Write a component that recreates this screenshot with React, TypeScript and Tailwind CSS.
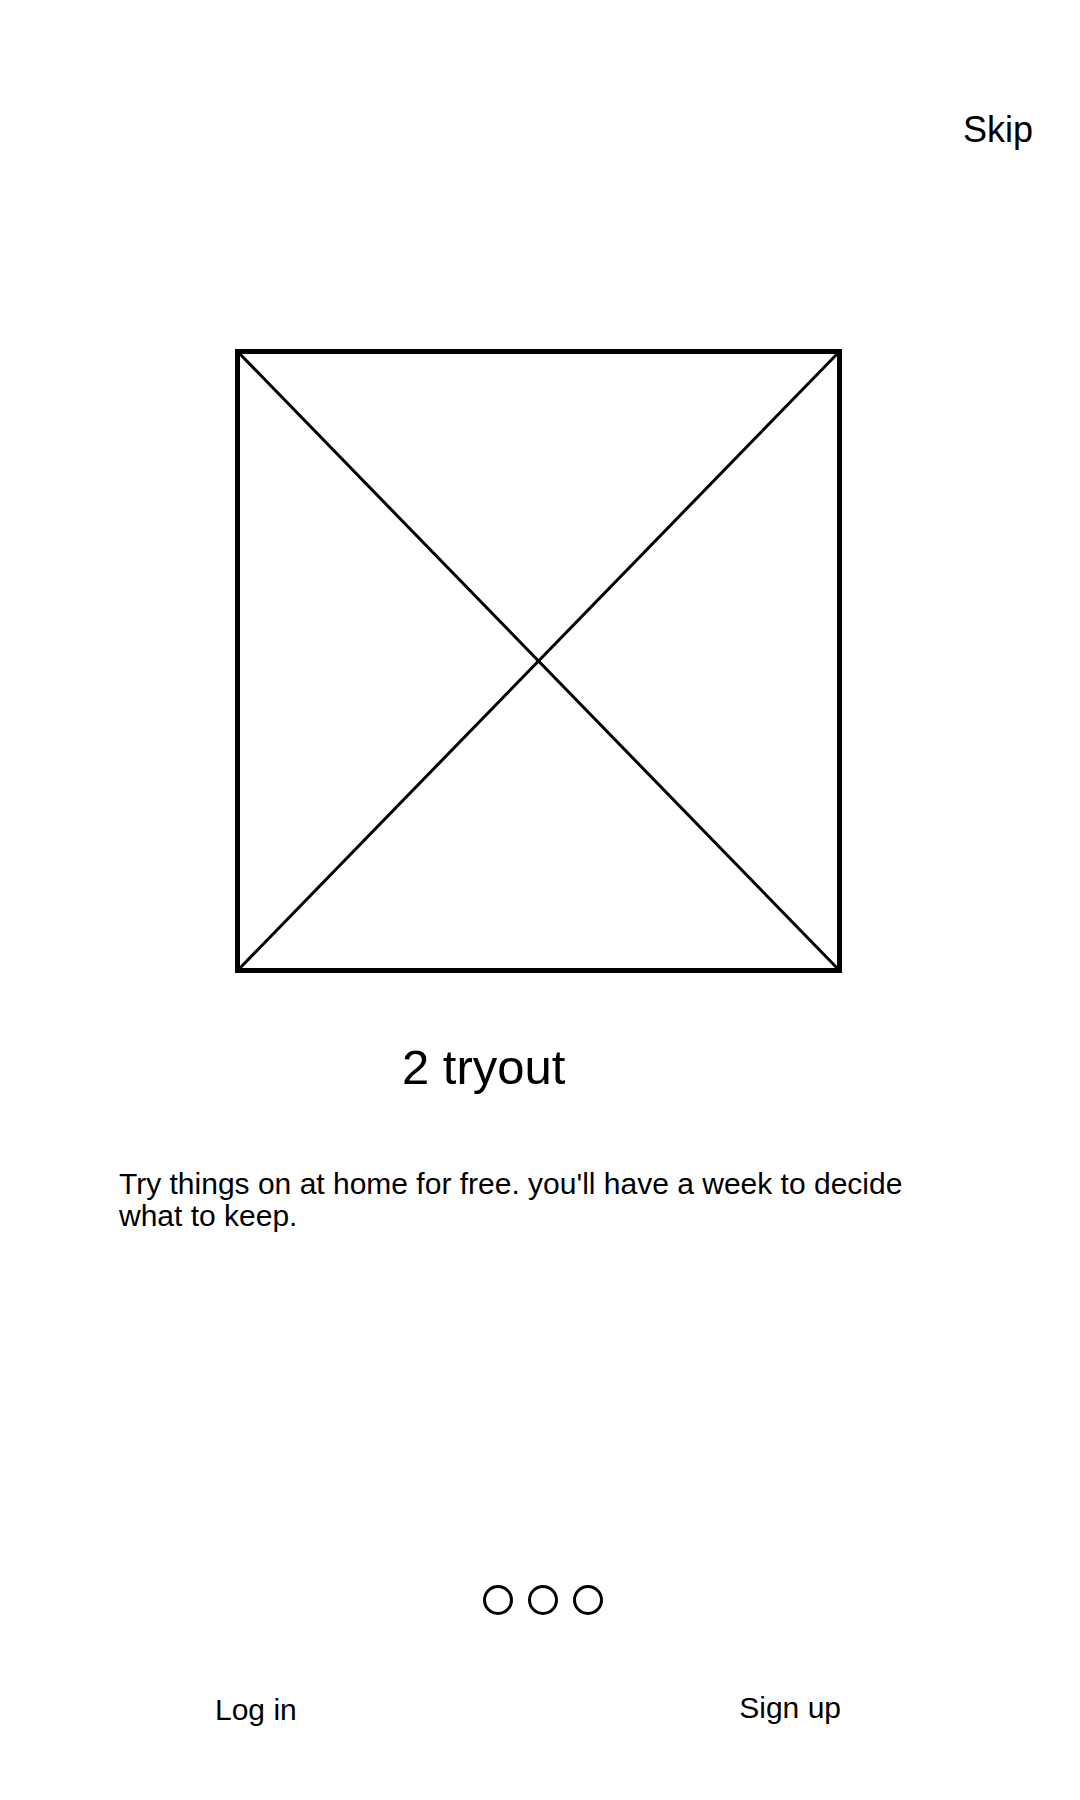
export default function App() {
  return (
    <div
      className="w-[1080px] h-[1800px] bg-white text-black flex flex-col"
      style={{ fontFamily: '"Liberation Sans", Arial, sans-serif' }}
    >
      <div className="flex justify-end pr-[47px] pt-[112px]">
        <span className="text-[36px] leading-[36px]">Skip</span>
      </div>

      <div className="mt-[201px] pl-[235px]">
        <svg width="607" height="624" viewBox="0 0 607 624" className="block">
          <line x1="3" y1="3" x2="604" y2="621" stroke="black" strokeWidth="3" />
          <line x1="604" y1="3" x2="3" y2="621" stroke="black" strokeWidth="3" />
          <rect x="2.5" y="2.5" width="602" height="619" fill="none" stroke="black" strokeWidth="5" />
        </svg>
      </div>

      <div className="mt-[70px] pl-[402px]">
        <span className="text-[49px] leading-[48px]">2 tryout</span>
      </div>

      <div className="mt-[77px] pl-[119px]">
        <p className="text-[30px] leading-[32px] max-w-[800px]">
          Try things on at home for free. you'll have a week to decide what to keep.
        </p>
      </div>

      <div className="mt-[353px] pl-[483px] flex gap-[15px]">
        <span className="w-[30px] h-[30px] rounded-full border-[3px] border-black" />
        <span className="w-[30px] h-[30px] rounded-full border-[3px] border-black" />
        <span className="w-[30px] h-[30px] rounded-full border-[3px] border-black" />
      </div>

      <div className="mt-[78px] pl-[215px] pr-[239px] flex justify-between items-start">
        <span className="text-[30px] leading-[30px] mt-[2px]">Log in</span>
        <span className="text-[30px] leading-[30px]">Sign up</span>
      </div>
    </div>
  );
}
